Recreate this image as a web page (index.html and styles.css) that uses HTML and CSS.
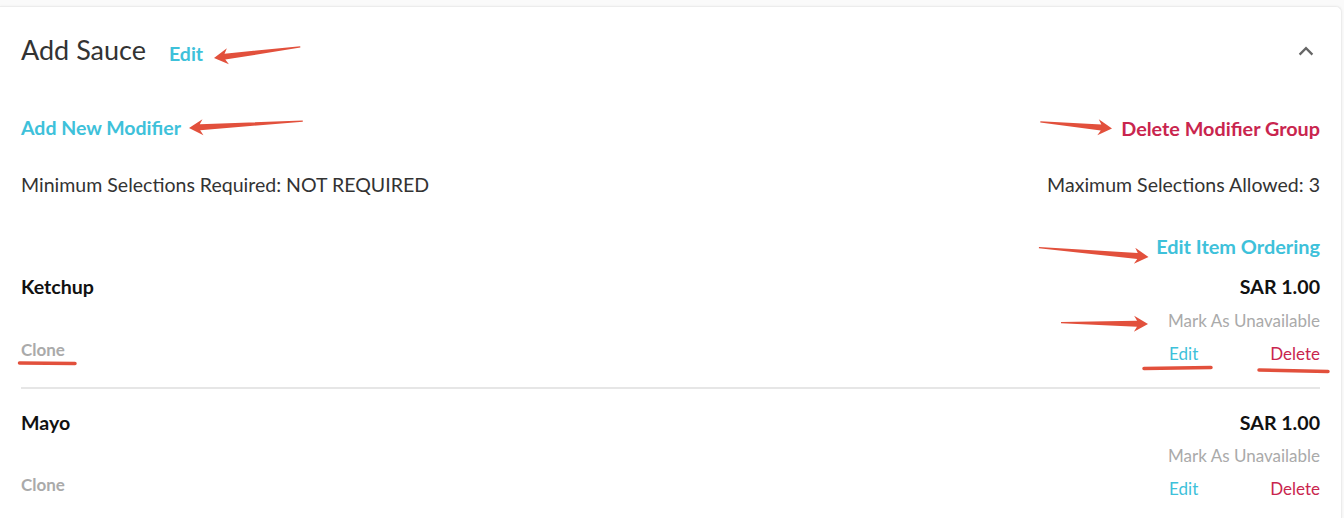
FILE: index.html
```html
<!DOCTYPE html>
<html lang="en">
<head>
<meta charset="utf-8">
<title>Add Sauce</title>
<link rel="stylesheet" href="styles.css">
</head>
<body>
<div class="page">
  <section class="card">
    <header class="card-head">
      <div class="title-group">
        <h2 class="title">Add Sauce</h2>
        <a class="link cyan bold head-edit">Edit</a>
      </div>
      <svg class="chevron" width="16" height="10" viewBox="0 0 16 10"><polyline points="1.6,8.6 8,2.2 14.4,8.6" fill="none" stroke="#666" stroke-width="2.3"/></svg>
    </header>
    <div class="line-row group-actions">
      <a class="link cyan bold">Add New Modifier</a>
      <a class="link red bold wide">Delete Modifier Group</a>
    </div>
    <div class="line-row selections">
      <span>Minimum Selections Required: NOT REQUIRED</span>
      <span>Maximum Selections Allowed: 3</span>
    </div>
    <div class="ordering">
      <a class="link cyan bold">Edit Item Ordering</a>
    </div>
    <ul class="items">
      <li class="item">
        <div class="item-left">
          <div class="item-name">Ketchup</div>
          <a class="clone">Clone</a>
        </div>
        <div class="item-right">
          <div class="price">SAR 1.00</div>
          <a class="mark">Mark As Unavailable</a>
          <div class="item-actions">
            <a class="link cyan small">Edit</a>
            <a class="link red small">Delete</a>
          </div>
        </div>
      </li>
      <li class="item">
        <div class="item-left">
          <div class="item-name">Mayo</div>
          <a class="clone">Clone</a>
        </div>
        <div class="item-right">
          <div class="price">SAR 1.00</div>
          <a class="mark">Mark As Unavailable</a>
          <div class="item-actions">
            <a class="link cyan small">Edit</a>
            <a class="link red small">Delete</a>
          </div>
        </div>
      </li>
    </ul>
  </section>
  <svg class="annotations" width="1344" height="518" viewBox="0 0 1344 518">
    <g fill="#e2503c">
      <polygon transform="translate(214 58) rotate(-7.3)" points="0,0 14,-8 11,-3 87,-0.6 87,0.6 11,3 14,8"/>
      <polygon transform="translate(189 128) rotate(-3.5)" points="0,0 14,-8 11,-3 114,-0.6 114,0.6 11,3 14,8"/>
      <polygon transform="translate(1112 128.5) rotate(185.3)" points="0,0 14,-8 11,-3 72,-0.6 72,0.6 11,3 14,8"/>
      <polygon transform="translate(1148.5 257) rotate(184.9)" points="0,0 14,-8 11,-3 110,-0.6 110,0.6 11,3 14,8"/>
      <polygon transform="translate(1148 324) rotate(180.9)" points="0,0 14,-8 11,-3 87,-0.6 87,0.6 11,3 14,8"/>
    </g>
    <g stroke="#e2503c" stroke-width="3.5" stroke-linecap="round" fill="none">
      <line x1="19.5" y1="363" x2="75" y2="363.5"/>
      <line x1="1144" y1="368.5" x2="1211" y2="367.5"/>
      <line x1="1259" y1="370" x2="1328" y2="371.5"/>
    </g>
  </svg>
</div>
</body>
</html>
```
FILE: styles.css
```css
* { box-sizing: border-box; }
html, body { margin: 0; padding: 0; }
body {
  background: #fafafa;
  font-family: Lato, "Open Sans", "Liberation Sans", sans-serif;
  color: #333;
  width: 1344px;
  height: 518px;
  overflow: hidden;
}
.page {
  position: relative;
  padding: 6px 2px 0 0;
  height: 518px;
}
.card {
  background: #fff;
  border: 1px solid #ececec;
  border-left: none;
  border-bottom: none;
  border-radius: 0 6px 0 0;
  box-shadow: 0 0 3px rgba(0,0,0,0.05);
  padding: 0 21px;
  height: 512px;
}
.card-head {
  display: flex;
  justify-content: space-between;
  align-items: flex-start;
  padding-top: 27px;
}
.title-group { display: flex; align-items: flex-start; }
.title {
  margin: 0;
  font-size: 27px;
  line-height: 32px;
  font-weight: 400;
  color: #333;
}
.head-edit {
  margin-left: 23px;
  margin-top: 8.4px;
}
.chevron { margin-top: 11.5px; margin-right: 6px; display: block; }
.link { text-decoration: none; cursor: pointer; font-size: 19.5px; line-height: 24px; }
.link.wide { font-size: 19.8px; }
.bold { font-weight: 700; }
.cyan { color: #3ec1da; }
.red { color: #c9254e; }
.line-row {
  display: flex;
  justify-content: space-between;
  font-size: 19.55px;
  line-height: 24px;
}
.group-actions { margin-top: 49.4px; }
.selections { margin-top: 33px; color: #333; }
.ordering {
  display: flex;
  justify-content: flex-end;
  margin-top: 41px;
}
.ordering .link { line-height: 16px; font-size: 19.9px; }
.items { list-style: none; margin: 0; padding: 0; }
.item {
  display: flex;
  justify-content: space-between;
  padding-top: 21.5px;
  padding-bottom: 23.6px;
  border-bottom: 2px solid #e6e6e6;
}
.item:last-child { border-bottom: none; }
.item-left, .item-right { display: flex; flex-direction: column; }
.item-right { align-items: flex-end; }
.item-name, .price {
  font-size: 19.6px;
  line-height: 24px;
  font-weight: 700;
  color: #111;
}
.clone {
  margin-top: 40.5px;
  font-size: 17px;
  line-height: 20px;
  font-weight: 700;
  color: #aaa;
}
.mark {
  margin-top: 11.5px;
  font-size: 17px;
  line-height: 20px;
  color: #aaa;
}
.item-actions {
  margin-top: 13px;
  display: flex;
  gap: 72px;
}
.link.small { font-size: 17px; line-height: 20px; }
.annotations {
  position: absolute;
  left: 0;
  top: 0;
  pointer-events: none;
}
```
